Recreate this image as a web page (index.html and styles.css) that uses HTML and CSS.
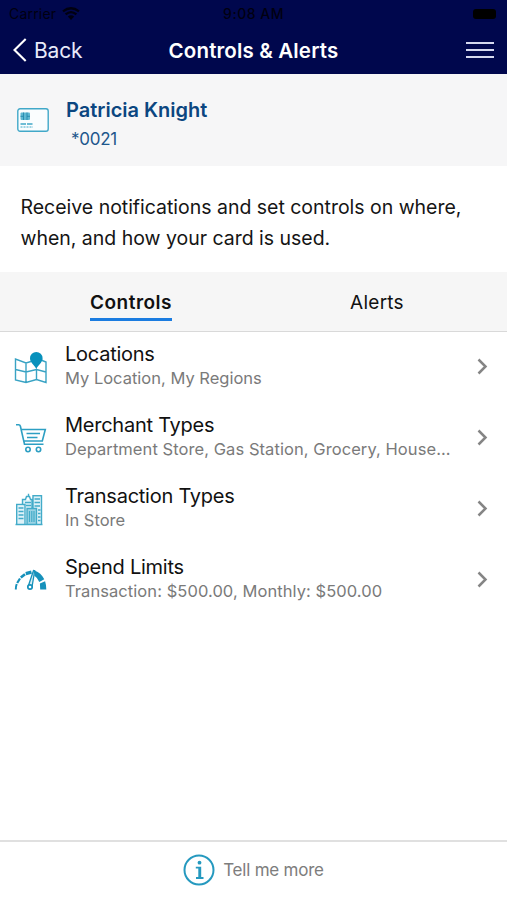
FILE: index.html
```html
<!DOCTYPE html>
<html lang="en">
<head>
<meta charset="utf-8">
<meta name="viewport" content="width=device-width, initial-scale=1">
<title>Controls &amp; Alerts</title>
<link rel="stylesheet" href="styles.css">
</head>
<body>
<div class="screen">
  <header class="top">
    <div class="status">
      <span class="carrier">Carrier
        <svg class="wifi" width="18" height="13" viewBox="0 0 18 13"><path d="M9 13 5.8 9.6Q9 7 12.2 9.6Z"/><path d="M3.6 7.4Q9 2.8 14.4 7.4M1 4.4Q9-2 17 4.4" fill="none" stroke="#000010" stroke-width="2.3"/></svg>
      </span>
      <span class="time">9:08 AM</span>
      <span class="battery"></span>
    </div>
    <nav class="nav">
      <a class="back"><svg width="14" height="24" viewBox="0 0 14 24"><path d="M12.7 1 1.5 12 12.7 23" fill="none" stroke="#fff" stroke-width="2.1"/></svg><span>Back</span></a>
      <h1 class="title">Controls &amp; Alerts</h1>
      <div class="menu"><i></i><i></i><i></i></div>
    </nav>
  </header>

  <section class="card">
    <svg class="card-icon" width="32" height="24" viewBox="0 0 32 24" fill="none" stroke="#41a8c8"><rect x=".8" y=".8" width="30.4" height="22.4" rx="2.2" fill="#fafdfe" stroke-width="1.4"/><rect x="3.5" y="4.5" width="9.5" height="7.5" rx="1" fill="#5eb8d2" stroke="none"/><path d="M6.5 4.5v7.5M10 4.5v7.5M3.5 8.3h3M10 8.3h3" stroke="#2589ae" stroke-width=".9"/><path d="M3.5 16h12.5" stroke-width="1.4" stroke-dasharray="5.5 1"/><path d="M3.5 19h12.5" stroke-dasharray="2 1"/></svg>
    <div>
      <div class="name">Patricia Knight</div>
      <div class="digits">*0021</div>
    </div>
  </section>

  <p class="intro">Receive notifications and set controls on where,<br>when, and how your card is used.</p>

  <div class="tabs">
    <div class="tab"><span class="active">Controls</span></div>
    <div class="tab"><span>Alerts</span></div>
  </div>

  <main class="list">
    <div class="row">
      <svg class="icon" width="34" height="34" viewBox="0 0 34 34" fill="none" stroke="#39a3c4" stroke-width="1.4"><path d="M17 10.500 12 12 1.500 8v21L12 31.500 22.500 28.500 32 31.500V11l-5-2M12 12v19.500M22.500 18v10.500M1.500 18.500 12 21l10.500-2.500L32 21"/><path d="M22.300 18.500C21 14 16 12 16 7.300a6.300 6.300 0 0 1 12.600 0c0 4.700-5 6.700-6.300 11.200z" fill="#0891bc" stroke="none"/></svg>
      <div class="text"><div class="label">Locations</div><div class="sub">My Location, My Regions</div></div>
      <svg class="chevron" width="11" height="17" viewBox="0 0 11 17"><path d="m1.500 1.500 7 7-7 7"/></svg>
    </div>
    <div class="row">
      <svg class="icon" width="34" height="34" viewBox="0 0 34 34" fill="none" stroke="#2d9fc3" stroke-width="1.600"><path d="M2 2.700h2.700q1.300 0 1.700 1.500L10.500 22.300h19M7 7.500h24.300l-3 11.500H9.500M12.500 11.500h13.500M13 15.500h10.500"/><circle cx="14" cy="27.500" r="2.200"/><circle cx="24.500" cy="27.500" r="2.200"/></svg>
      <div class="text"><div class="label">Merchant Types</div><div class="sub wide">Department Store, Gas Station, Grocery, House...</div></div>
      <svg class="chevron" width="11" height="17" viewBox="0 0 11 17"><path d="m1.500 1.500 7 7-7 7"/></svg>
    </div>
    <div class="row">
      <svg class="icon" width="34" height="34" viewBox="0 0 34 34" fill="none" stroke="#42abc9" stroke-width="1.400"><path d="M3 13h8v18H3zM18 4h9v27h-9zM9 7h9v8H9z" fill="#dff2f8" stroke="none"/><path d="M13 16h9v15h-9z" fill="#9bd3e4" stroke="none"/><path d="M1.500 31.500h27M2.700 31V11.500H11V31M8.500 11V6.500h3l1-3h3l1 3h1.500V15M14.500 3.500V.8M19 15V2.800h8.500V31M13 31V15.500h9.500V31"/><path d="M4.500 15h5M4.500 18.500h5M4.500 22h5M4.500 25.500h5M11 9.500h6M12 12.500h5M20.500 6H26M20.500 9.500H26M20.500 13H26M24 17h2.500M24 20.500h2.500M24 24h2.500M24 27.500h2.500" stroke-width="1.300"/><path d="M15.500 18v11M17.800 18v11M20 18v11" stroke-width="1.200"/></svg>
      <div class="text"><div class="label">Transaction Types</div><div class="sub">In Store</div></div>
      <svg class="chevron" width="11" height="17" viewBox="0 0 11 17"><path d="m1.500 1.500 7 7-7 7"/></svg>
    </div>
    <div class="row">
      <svg class="icon" width="34" height="34" viewBox="0 0 34 34" fill="none" stroke="#1691bb"><path d="M1.800 25.500c0-2.200.3-4 .9-5.500" stroke-width="2"/><path d="M3.200 19 6 14.500" stroke-width="2.200"/><path d="m6.800 13.500 4.200-3.200" stroke-width="2.700"/><path d="m11.800 9.700 5.700-1.500" stroke-width="3.300"/><path d="M21 6.700q5.700 1.600 9.300 8.600l-5 2.700q-1.600-4.100-4.900-6.200zM25.900 19.600l5.200-2.300q1.100 3.200 1.200 8.200h-6.100z" fill="#1691bb" stroke="none"/><path d="m14.300 22 5.200-15.500 1.200.3L18 23" fill="#d5edf5" stroke-width="1.300"/><circle cx="16" cy="23" r="2.200" fill="#fff" stroke-width="1.700"/></svg>
      <div class="text"><div class="label">Spend Limits</div><div class="sub wide">Transaction: $500.00, Monthly: $500.00</div></div>
      <svg class="chevron" width="11" height="17" viewBox="0 0 11 17"><path d="m1.500 1.500 7 7-7 7"/></svg>
    </div>
  </main>

  <footer class="foot">
    <svg width="32" height="32" viewBox="0 0 32 32"><circle cx="16" cy="16" r="14.500" fill="none" stroke="#2599bf" stroke-width="2"/><circle cx="16.500" cy="8.700" r="1.900" fill="#2599bf"/><path d="M12.800 12.700h5.400v10.300h2.300v1.900h-7.500v-1.900h2.300v-8.400h-2.500z" fill="#2599bf"/></svg>
    <span>Tell me more</span>
  </footer>
</div>
</body>
</html>
```

FILE: styles.css
```css
* { box-sizing: border-box; }
body { margin: 0; background: #fff; font-family: Inter, "Liberation Sans", sans-serif; color: #111; }
svg { display: block; flex: none; }
.screen { height: 900px; display: flex; flex-direction: column; overflow: hidden; white-space: nowrap; }
.top { height: 74px; background: #00074d; flex: none; }
.status { height: 27px; padding: 0 11px 0 9px; display: grid; grid-template-columns: 1fr auto 1fr; align-items: center; font-size: 14px; line-height: 27px; color: #000010; }
.carrier { display: flex; gap: 6px; align-items: center; letter-spacing: .2px; }
.wifi { fill: #000010; }
.time { font-weight: 500; letter-spacing: .5px; position: relative; left: 1px; }
.battery { width: 23px; height: 10px; border-radius: 3px; background: #000; justify-self: end; }
.nav { height: 46px; padding: 0 13px; display: grid; grid-template-columns: 1fr auto 1fr; align-items: center; color: #fff; }
.back { display: flex; align-items: center; gap: 7px; font-size: 21px; letter-spacing: -.2px; color: #e8eafa; }
.title { margin: 0; font-size: 20.500px; font-weight: 600; letter-spacing: .15px; }
.menu { justify-self: end; width: 28px; display: grid; gap: 5px; }
.menu i { height: 2px; background: #d5d8ef; }
.card { height: 92px; flex: none; background: #f6f6f7; padding: 17px 17px 0; display: flex; gap: 17px; color: #0b4680; }
.card-icon { margin-top: 17px; }
.name { margin-top: 6px; font-size: 20px; line-height: 26px; font-weight: 600; }
.digits { margin: 6px 0 0 5px; font-size: 17px; line-height: 20px; letter-spacing: -.25px; color: #1d578c; }
.intro { margin: 0; height: 106px; flex: none; padding: 26px 20.500px 0; font-size: 19.500px; line-height: 31px; letter-spacing: -.02px; color: #151515; }
.tabs { height: 60px; flex: none; background: #f6f6f6; border-bottom: 1px solid #d9d9d9; display: grid; grid-template-columns: 262px 230px; }
.tab { text-align: center; padding-top: 19px; font-size: 19px; line-height: 24px; letter-spacing: .25px; }
.tab span { display: inline-block; height: 30px; }
.tab .active { font-weight: 600; letter-spacing: .5px; border-bottom: 3px solid #1b7ce0; }
.list { flex: 1; }
.row { height: 71px; padding: 0 19px 2px 14px; display: flex; align-items: center; }
.icon { margin-top: 2px; }
.text { flex: 1; margin: -2px 0 0 17px; }
.label { font-size: 20px; line-height: 24px; letter-spacing: -.25px; }
.sub { font-size: 16.500px; line-height: 24px; color: #7a7a7a; }
.wide { letter-spacing: .07px; }
.chevron { fill: none; stroke: #858585; stroke-width: 2.500; }
.foot { height: 60px; flex: none; border-top: 2px solid #e0e0e0; padding-bottom: 2px; display: flex; align-items: center; justify-content: center; gap: 8px; font-size: 17px; letter-spacing: -.22px; color: #7d7d7d; }
```
